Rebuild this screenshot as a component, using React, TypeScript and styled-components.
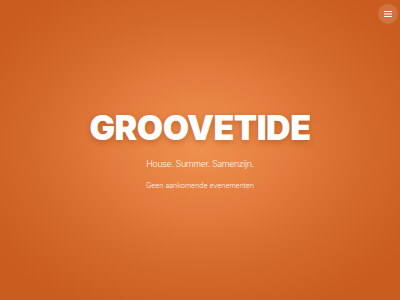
import React from "react";
import styled, { createGlobalStyle } from "styled-components";

const Global = createGlobalStyle`
  html, body { margin: 0; padding: 0; height: 100%; }
  body { font-family: Inter, "Noto Sans", sans-serif; }
  #root { height: 100%; }
`;

const Page = styled.main`
  position: relative;
  width: 100%;
  height: 100vh;
  overflow: hidden;
  background: radial-gradient(ellipse 62% 62% at 50% 48%, #f0914f 0%, #e27a3c 40%, #d2682a 70%, #c95c1e 100%);
  display: flex;
  flex-direction: column;
  align-items: center;
  justify-content: center;
  color: #fff;
`;

const Hero = styled.section`
  display: flex;
  flex-direction: column;
  align-items: center;
`;

const Title = styled.h1`
  margin: 0;
  font-family: Inter, sans-serif;
  font-weight: 900;
  font-size: 34px;
  line-height: 1;
  letter-spacing: -0.5px;
  color: #fff;
  text-shadow: 0 2px 6px rgba(120, 40, 0, 0.35);
`;

const Tagline = styled.p`
  margin: 14px 0 0;
  font-family: Inter, sans-serif;
  font-weight: 300;
  font-size: 9px;
  letter-spacing: -0.42px;
  line-height: 1;
  color: rgba(255, 255, 255, 0.95);
`;

const Empty = styled.p`
  margin: 14px 0 0;
  font-family: Inter, sans-serif;
  font-weight: 300;
  font-size: 7.2px;
  letter-spacing: -0.1px;
  line-height: 1;
  color: rgba(255, 255, 255, 0.9);
`;

const MenuButton = styled.button`
  position: absolute;
  top: 4px;
  right: 2px;
  width: 20px;
  height: 20px;
  border-radius: 50%;
  border: none;
  padding: 0;
  background: rgba(255, 255, 255, 0.14);
  display: flex;
  align-items: center;
  justify-content: center;
  cursor: pointer;
`;

export default function App() {
  return (
    <>
      <Global />
      <Page>
        <MenuButton aria-label="Menu">
          <svg width="8" height="8" viewBox="0 0 8 8">
            <rect x="0" y="1" width="8" height="1" fill="#fff" />
            <rect x="0" y="3.5" width="8" height="1" fill="#fff" />
            <rect x="0" y="6" width="8" height="1" fill="#fff" />
          </svg>
        </MenuButton>
        <Hero>
          <Title>GROOVETIDE</Title>
          <Tagline>House. Summer. Samenzijn.</Tagline>
          <Empty>Geen aankomende evenementen</Empty>
        </Hero>
      </Page>
    </>
  );
}
